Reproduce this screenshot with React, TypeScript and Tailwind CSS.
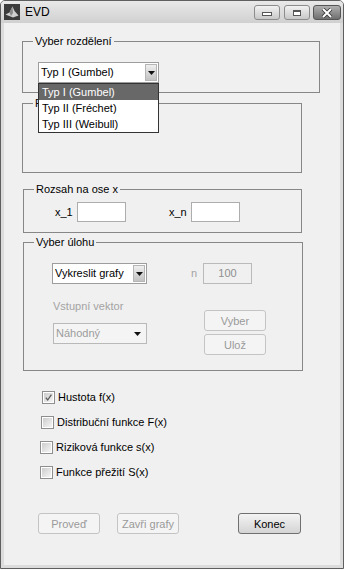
import type { ReactNode } from 'react'

function Caret() {
  return (
    <svg width="7" height="4" viewBox="0 0 7 4" aria-hidden="true">
      <polygon points="0,0 7,0 3.5,4" fill="#111" />
    </svg>
  )
}

function AppIcon() {
  return (
    <svg width="16" height="16" viewBox="0 0 16 16" aria-hidden="true">
      <rect width="16" height="16" fill="#3b3b3b" />
      <path d="M1.5 10.5 L5.5 8.5 L8.5 2.5 L10.5 7 L14.5 11.5 L9 13.5 Z" fill="#cfcfcf" />
      <path d="M5.5 8.5 L8.5 2.5 L9 9 L7 12 Z" fill="#8a8a8a" />
    </svg>
  )
}

function Group({ title, className, children }: { title: string; className: string; children?: ReactNode }) {
  return (
    <fieldset className={`border border-[#878787] ${className}`}>
      <legend className="ml-[10px] px-[2px] leading-[12px]">{title}</legend>
      {children}
    </fieldset>
  )
}

function Popup({ value, className, disabled }: { value: string; className: string; disabled?: boolean }) {
  return (
    <div
      className={`flex h-[21px] items-center border ${
        disabled ? 'border-[#b9b9b9] bg-[#f4f4f4] text-[#9c9c9c]' : 'border-[#9d9d9d] bg-white'
      } ${className}`}
    >
      <span className="pl-[2px] whitespace-nowrap">{value}</span>
      {disabled ? (
        <span className="ml-auto mr-[5px] flex">
          <Caret />
        </span>
      ) : (
        <span className="ml-auto mr-px flex h-[17px] w-[12px] items-center justify-center border border-[#b5b5b5] bg-linear-to-b from-[#efefef] to-[#c2c2c2]">
          <Caret />
        </span>
      )}
    </div>
  )
}

function Check({ label, checked, className }: { label: string; checked?: boolean; className: string }) {
  return (
    <div className={`flex h-[13px] items-center ${className}`}>
      <span className="flex h-[13px] w-[13px] shrink-0 border border-[#8e8e8e] bg-white p-px">
        <span className="flex h-full w-full items-center justify-center bg-linear-to-br from-[#cdcdcd] to-[#f5f5f5]">
          {checked && (
            <svg width="9" height="9" viewBox="0 0 9 9" aria-hidden="true">
              <path d="M1.8 4.6 L3.7 7 L7.4 1.6" fill="none" stroke="#5a5a5a" strokeWidth="1.3" />
            </svg>
          )}
        </span>
      </span>
      <span className="ml-[3px] whitespace-nowrap">{label}</span>
    </div>
  )
}

function Btn({ label, className, disabled }: { label: string; className: string; disabled?: boolean }) {
  return (
    <button
      type="button"
      className={`h-[21px] rounded-[3px] border leading-[12px] ${
        disabled
          ? 'border-[#c4c4c4] bg-[#f4f4f4] text-[#9a9a9a]'
          : 'border-[#707070] bg-linear-to-b from-[#f4f4f4] to-[#d4d4d4] text-black'
      } ${className}`}
    >
      {label}
    </button>
  )
}

export default function App() {
  return (
    <div className="min-h-screen bg-white font-['Liberation_Sans',Arial,sans-serif] text-[11px] text-black">
      <div className="flex h-[569px] w-[344px] flex-col rounded-t-[5px] border border-[#5f5f5f] bg-[#dcdcdc]">
        {/* title bar */}
        <div className="flex h-[22px] shrink-0 items-center rounded-t-[4px] bg-linear-to-b from-[#e9e9e9] to-[#d0d0d0] pl-[3px] pr-[2px]">
          <AppIcon />
          <span className="ml-[5px] text-[12px]">EVD</span>
          <span className="ml-auto mt-[1px] flex h-[15px] w-[26px] items-end justify-center rounded-[3px] border border-[#8c8c8c] bg-linear-to-b from-[#f2f2f2] to-[#c8c8c8] pb-[3px]">
            <span className="h-[4px] w-[10px] border border-[#555] bg-white" />
          </span>
          <span className="ml-[4px] mt-[1px] flex h-[15px] w-[26px] items-center justify-center rounded-[3px] border border-[#8c8c8c] bg-linear-to-b from-[#f2f2f2] to-[#c8c8c8]">
            <span className="h-[6px] w-[8px] border border-t-2 border-[#555] bg-white" />
          </span>
          <span className="ml-[3px] mt-[1px] flex h-[15px] w-[28px] items-center justify-center rounded-[3px] border border-[#555] bg-linear-to-b from-[#b0b0b0] to-[#707070]">
            <svg width="12" height="10" viewBox="0 0 12 10" aria-hidden="true">
              <path d="M2 1 L10 9 M10 1 L2 9" stroke="#333" strokeWidth="3.6" />
              <path d="M2 1 L10 9 M10 1 L2 9" stroke="#fff" strokeWidth="2" />
            </svg>
          </span>
        </div>

        {/* client area */}
        <div className="mx-[3px] mb-[3px] flex flex-1 flex-col bg-[#f0f0f0]">
          <Group title="Vyber rozdělení" className="ml-[18px] mt-[12px] h-[58px] w-[298px]">
            <div className="relative ml-[15px] mt-[15px] w-[121px]">
              <Popup value="Typ I (Gumbel)" className="w-[121px]" />
              {/* otevřený seznam překrývá panel pod ním */}
              <ul className="absolute left-0 top-full z-10 w-[121px] border border-[#333] bg-white leading-[16px]">
                <li className="bg-[#686868] pl-[3px] text-white">Typ I (Gumbel)</li>
                <li className="pl-[3px]">Typ II (Fréchet)</li>
                <li className="pl-[3px]">Typ III (Weibull)</li>
              </ul>
            </div>
          </Group>

          <Group title="P" className="ml-[18px] mt-[4px] h-[76px] w-[280px]" />

          <Group title="Rozsah na ose x" className="ml-[19px] mt-[10px] h-[50px] w-[279px]">
            <div className="mt-[7px] flex items-center">
              <span className="ml-[31px] w-[18px]">x_1</span>
              <input readOnly className="ml-[4px] h-[20px] w-[49px] border border-[#adadad] bg-white" />
              <span className="ml-[43px] w-[18px]">x_n</span>
              <input readOnly className="ml-[4px] h-[20px] w-[49px] border border-[#adadad] bg-white" />
            </div>
          </Group>

          <Group title="Vyber úlohu" className="ml-[19px] mt-[3px] h-[135px] w-[280px]">
            <div className="mt-[15px] flex">
              <div className="ml-[28px] flex w-[95px] flex-col">
                <Popup value="Vykreslit grafy" className="w-[95px]" />
                <span className="mt-[16px] pl-px leading-[12px] text-[#a3a3a3]">Vstupní vektor</span>
                <Popup value="Náhodný" className="ml-px mt-[11px] w-[94px]" disabled />
              </div>
              <div className="ml-[44px] flex flex-col">
                <div className="flex h-[21px] items-center">
                  <span className="w-[12px] text-[#a3a3a3]">n</span>
                  <span className="flex h-[21px] w-[49px] items-center justify-center border border-[#bababa] text-[#8f8f8f]">
                    100
                  </span>
                </div>
                <Btn label="Vyber" className="ml-[13px] mt-[26px] w-[62px]" disabled />
                <Btn label="Ulož" className="ml-[13px] mt-[3px] w-[62px]" disabled />
              </div>
            </div>
          </Group>

          <div className="mt-[20px] flex flex-col gap-[12px]">
            <Check label="Hustota f(x)" checked className="ml-[38px]" />
            <Check label="Distribuční funkce F(x)" className="ml-[37px]" />
            <Check label="Riziková funkce s(x)" className="ml-[36px]" />
            <Check label="Funkce přežití S(x)" className="ml-[36px]" />
          </div>

          <div className="mt-[34px] flex">
            <Btn label="Proveď" className="ml-[34px] w-[62px]" disabled />
            <Btn label="Zavři grafy" className="ml-[17px] w-[62px]" disabled />
            <Btn label="Konec" className="ml-[59px] w-[63px]" />
          </div>
        </div>
      </div>
    </div>
  )
}
